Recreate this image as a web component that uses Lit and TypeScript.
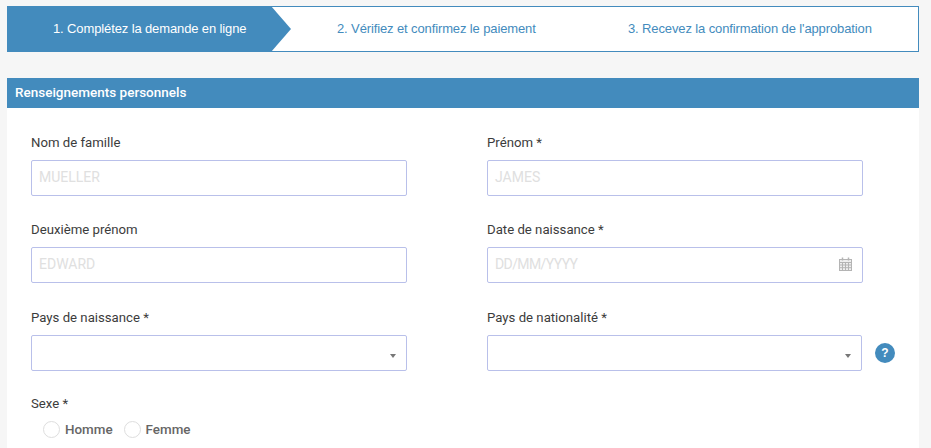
import { LitElement, html, css } from "lit";
import { customElement } from "lit/decorators.js";

@customElement("app-root")
export class AppRoot extends LitElement {
  static styles = css`
    :host { display: block; width: 931px; height: 448px; overflow: hidden; background: #f6f6f6; font-family: "Roboto", "Liberation Sans", sans-serif; box-sizing: border-box; padding: 6px 12px 0 7px; }
    * { box-sizing: border-box; }
    .steps { display: grid; grid-template-columns: 284px 1fr 1fr; height: 46px; border: 1px solid #438bbd; background: #fff; position: relative; font-family: "Liberation Sans", Arial, sans-serif; font-size: 13px; letter-spacing: -0.12px; color: #438bbd; }
    .step { display: flex; align-items: center; white-space: nowrap; padding-bottom: 1px; }
    .s1 { background: #438bbd; color: #fff; margin: -1px 0 -1px -1px; padding-left: 46px; height: 46px; width: 284px; clip-path: polygon(0 0, 264px 0, 284px 23px, 264px 46px, 0 46px); }
    .s2 { padding-left: 45px; }
    .s3 { padding-left: 23px; }
    .head { margin-top: 26px; height: 30px; background: #438bbd; color: #fff; font-weight: 500; font-size: 13.5px; display: flex; align-items: center; padding-left: 8px; padding-bottom: 3px; }
    .panel { background: #fff; height: 340px; padding: 26px 24px 0; display: grid; grid-template-columns: 376px 376px; column-gap: 80px; grid-template-rows: 87px 88px 87px auto; position: relative; }
    .lbl { display: block; font-size: 13.2px; line-height: 18px; color: #3c3c3c; height: 26px; }
    .input { height: 36px; border: 1px solid #b9c0ea; border-radius: 2px; background: #fff; display: flex; align-items: center; justify-content: space-between; padding: 0 10px 3px 7px; font-size: 14px; color: #e0e0e0; }
    .date { letter-spacing: -0.6px; }
    .sel { justify-content: flex-end; padding: 3px 8px 0; }
    .caret { width: 0; height: 0; border-left: 3px solid transparent; border-right: 3px solid transparent; border-top: 4px solid #777; margin: 3px 2px 0 0; }
    .withhelp { display: flex; align-items: center; gap: 13px; width: 408px; }
    .withhelp .input { flex: none; width: 375px; }
    .help { width: 20px; height: 20px; border-radius: 50%; background: #438bbd; color: #fff; font-size: 12px; font-weight: bold; display: flex; align-items: center; justify-content: center; font-family: "Liberation Sans", sans-serif; flex: none; }
    .radios { display: flex; align-items: center; padding-left: 12px; height: 20px; font-size: 13.4px; font-weight: 500; color: #666; }
    .dot { width: 17px; height: 17px; border-radius: 50%; border: 1px solid #dedede; background: #fff; margin-right: 5px; }
    .r { display: flex; align-items: center; margin-right: 11px; }
    .sex { grid-column: 1; }
    .sex .lbl { height: 24px; margin-top: -1px; }
    svg { display: block; }
  `;

  private field(label: string, ph: string, icon = false) {
    return html`<div class="field"><div class="lbl">${label}</div><div class="input"><span class=${icon ? "date" : ""}>${ph}</span>${icon ? html`<svg width="13" height="14" viewBox="0 0 13 14" fill="none" stroke="#b4b4b4" stroke-width="1"><rect x="0.5" y="2.5" width="12" height="11" fill="#eee"/><path d="M0.5 5.5h12M0.5 8h12M0.5 10.7h12M3.5 5.5v8M6.5 5.5v8M9.5 5.5v8"/><path d="M3.5 0.5v3M9.5 0.5v3" stroke-width="1.5"/></svg>` : ""}</div></div>`;
  }

  render() {
    return html`
      <div class="steps">
        <div class="step s1">1. Complétez la demande en ligne</div>
        <div class="step s2">2. Vérifiez et confirmez le paiement</div>
        <div class="step s3">3. Recevez la confirmation de l'approbation</div>
      </div>
      <div class="head">Renseignements personnels</div>
      <div class="panel">
        ${this.field("Nom de famille", "MUELLER")}
        ${this.field("Prénom *", "JAMES")}
        ${this.field("Deuxième prénom", "EDWARD")}
        ${this.field("Date de naissance *", "DD/MM/YYYY", true)}
        <div class="field"><div class="lbl">Pays de naissance *</div><div class="input sel"><span class="caret"></span></div></div>
        <div class="field"><div class="lbl">Pays de nationalité *</div><div class="withhelp"><div class="input sel"><span class="caret"></span></div><span class="help">?</span></div></div>
        <div class="sex"><div class="lbl">Sexe *</div>
          <div class="radios"><span class="r"><span class="dot"></span>Homme</span><span class="r"><span class="dot"></span>Femme</span></div>
        </div>
      </div>
    `;
  }
}
